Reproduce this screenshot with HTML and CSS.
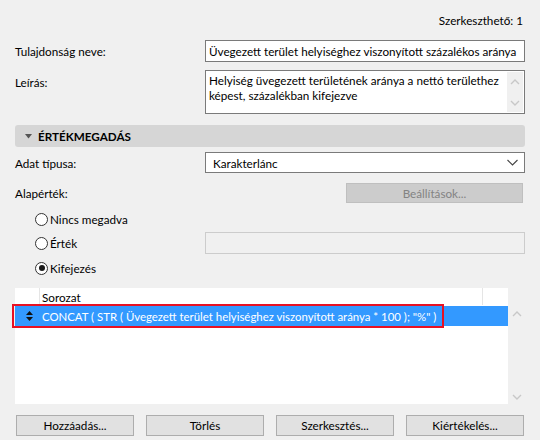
FILE: index.html
```html
<!DOCTYPE html>
<html lang="hu">
<head>
<meta charset="utf-8">
<link rel="stylesheet" href="styles.css">
</head>
<body>
<div class="dialog">
  <div class="editable">Szerkeszthető: 1</div>

  <div class="row row-name">
    <div class="label">Tulajdonság neve:</div>
    <div class="field input">Üvegezett terület helyiséghez viszonyított százalékos aránya</div>
  </div>

  <div class="row row-desc">
    <div class="label">Leírás:</div>
    <div class="field textarea">
      <div class="ta-text">Helyiség üvegezett területének aránya a nettó területhez<br>képest, százalékban kifejezve</div>
      <div class="ta-scroll">
        <svg width="10" height="7" viewBox="0 0 10 7"><path d="M1 6 L5 2 L9 6" fill="none" stroke="#c8c8c8" stroke-width="1.4"/></svg>
        <svg width="10" height="7" viewBox="0 0 10 7"><path d="M1 1 L5 5 L9 1" fill="none" stroke="#c8c8c8" stroke-width="1.4"/></svg>
      </div>
    </div>
  </div>

  <div class="section">
    <svg class="tri" width="7" height="5" viewBox="0 0 7 5"><path d="M0 0 H7 L3.5 4.5 Z" fill="#555"/></svg>
    <span>ÉRTÉKMEGADÁS</span>
  </div>

  <div class="row row-type">
    <div class="label">Adat típusa:</div>
    <div class="field select">
      <span>Karakterlánc</span>
      <svg width="11" height="7" viewBox="0 0 11 7"><path d="M0.5 1 L5.5 6 L10.5 1" fill="none" stroke="#444" stroke-width="1.1"/></svg>
    </div>
  </div>

  <div class="row row-default">
    <div class="label">Alapérték:</div>
    <div class="btn-settings">Beállítások...</div>
  </div>

  <div class="radio-row r1">
    <div class="radio"><span class="circle"></span>Nincs megadva</div>
  </div>
  <div class="radio-row r2">
    <div class="radio"><span class="circle"></span>Érték</div>
    <div class="field disabled-input"></div>
  </div>
  <div class="radio-row r3">
    <div class="radio"><span class="circle checked"></span>Kifejezés</div>
  </div>

  <div class="listwrap">
    <div class="list">
      <div class="lrow lhead">
        <div class="c1"></div>
        <div class="c2">Sorozat</div>
        <div class="c3"></div>
      </div>
      <div class="lrow lsel">
        <div class="c1">
          <svg width="7" height="10" viewBox="0 0 7 10"><path d="M3.5 0 L7 4 H0 Z M3.5 10 L7 6 H0 Z" fill="#111"/></svg>
        </div>
        <div class="c2"><span class="expr">CONCAT ( STR ( Üvegezett terület helyiséghez viszonyított aránya * 100 ); "%" )</span></div>
        <div class="c3"></div>
      </div>
    </div>
    <div class="lscroll">
      <svg width="10" height="7" viewBox="0 0 10 7"><path d="M1 6 L5 2 L9 6" fill="none" stroke="#c8c8c8" stroke-width="1.4"/></svg>
      <svg width="10" height="7" viewBox="0 0 10 7"><path d="M1 1 L5 5 L9 1" fill="none" stroke="#c8c8c8" stroke-width="1.4"/></svg>
    </div>
  </div>

  <div class="buttons">
    <div class="btn">Hozzáadás...</div>
    <div class="btn">Törlés</div>
    <div class="btn">Szerkesztés...</div>
    <div class="btn">Kiértékelés...</div>
  </div>
</div>
</body>
</html>
```
FILE: styles.css
```css
html, body {
  margin: 0;
  padding: 0;
  background: #f0f0f0;
}
body {
  font-family: Lato, "Noto Sans", sans-serif;
  font-size: 11.7px;
  color: #000;
  width: 540px;
  height: 440px;
  overflow: hidden;
}
.dialog {
  padding: 0 15px;
  display: flex;
  flex-direction: column;
}
.editable {
  text-align: right;
  padding-right: 2px;
  height: 16px;
  line-height: 16px;
  margin-top: 12px;
}
.row {
  display: flex;
  align-items: flex-start;
}
.label {
  width: 190px;
  flex: none;
}
.field {
  box-sizing: border-box;
  width: 320px;
  background: #fff;
  border: 1px solid #7a7a7a;
}
.row-name {
  margin-top: 12px;
  height: 22px;
  align-items: center;
}
.input {
  height: 22px;
  line-height: 20px;
  padding-left: 3px;
  white-space: nowrap;
  overflow: hidden;
}
.row-desc {
  margin-top: 8px;
}
.row-desc .label {
  line-height: 16px;
  padding-top: 4px;
}
.textarea {
  height: 44px;
  display: flex;
}
.ta-text {
  flex: 1;
  padding: 2px 3px;
  line-height: 15px;
  white-space: nowrap;
}
.ta-scroll {
  width: 16px;
  margin: 1px 1px 1px 0;
  background: #f0f0f0;
  display: flex;
  flex-direction: column;
  justify-content: space-between;
  align-items: center;
  padding: 6px 0 5px;
  box-sizing: border-box;
}
.section {
  margin-top: 11px;
  height: 22px;
  background: #d6d6d6;
  border-radius: 3px;
  display: flex;
  align-items: center;
  font-weight: bold;
}
.section .tri {
  margin-left: 10px;
  margin-right: 6px;
}
.row-type {
  margin-top: 5px;
  height: 21px;
  align-items: center;
}
.select {
  height: 21px;
  display: flex;
  align-items: center;
  justify-content: space-between;
  padding: 0 6px 0 7px;
}
.row-default {
  margin-top: 10px;
  height: 20px;
  align-items: center;
}
.btn-settings {
  margin-left: auto;
  margin-right: 2px;
  width: 177px;
  height: 20px;
  box-sizing: border-box;
  border: 1px solid #bfbfbf;
  background: #cccccc;
  color: #838383;
  text-align: center;
  line-height: 18px;
}
.radio-row {
  display: flex;
  align-items: center;
  height: 22px;
}
.r1 { margin-top: 5px; }
.r2 { margin-top: 2px; }
.r3 { margin-top: 3px; }
.radio {
  width: 190px;
  flex: none;
  display: flex;
  align-items: center;
  padding-left: 20px;
  box-sizing: border-box;
}
.circle {
  width: 13px;
  height: 13px;
  box-sizing: border-box;
  border: 1px solid #333;
  border-radius: 50%;
  background: #fff;
  margin-right: 2px;
  position: relative;
}
.circle.checked::after {
  content: "";
  position: absolute;
  left: 2.5px;
  top: 2.5px;
  width: 6px;
  height: 6px;
  border-radius: 50%;
  background: #1a1a1a;
}
.disabled-input {
  height: 22px;
  background: #f0f0f0;
  border-color: #cccccc;
}
.listwrap {
  margin-top: 9px;
  display: flex;
  height: 116px;
}
.list {
  width: 493px;
  background: #fff;
  display: flex;
  flex-direction: column;
}
.lrow {
  display: flex;
}
.lhead {
  height: 17px;
  line-height: 18px;
}
.lhead .c1 {
  border-right: 1px solid #e5e5e5;
}
.lhead .c3 {
  border-left: 1px solid #e5e5e5;
}
.c1 {
  width: 25px;
  flex: none;
  box-sizing: border-box;
  display: flex;
  align-items: center;
  justify-content: center;
}
.c2 {
  flex: 1;
  padding-left: 2px;
  white-space: nowrap;
  overflow: hidden;
}
.c3 {
  width: 25px;
  flex: none;
}
.lsel {
  margin-top: 1px;
  height: 20px;
  line-height: 20px;
  background: #3399ff;
  color: #fff;
  position: relative;
}
.lsel .c1 {
  padding-left: 3px;
}
.expr {
  font-size: 11.4px;
}
.lsel::after {
  content: "";
  position: absolute;
  left: -3px;
  top: -2px;
  width: 432px;
  height: 24px;
  border: 2px solid #e81123;
  box-sizing: border-box;
}
.lscroll {
  width: 17px;
  display: flex;
  flex-direction: column;
  justify-content: space-between;
  align-items: center;
  padding: 22px 0 3px;
  box-sizing: border-box;
}
.buttons {
  margin-top: 11px;
  display: flex;
  gap: 12px;
  padding-left: 1px;
}
.btn {
  width: 118px;
  height: 21px;
  box-sizing: border-box;
  border: 1px solid #adadad;
  background: #e1e1e1;
  text-align: center;
  line-height: 19px;
}
```
